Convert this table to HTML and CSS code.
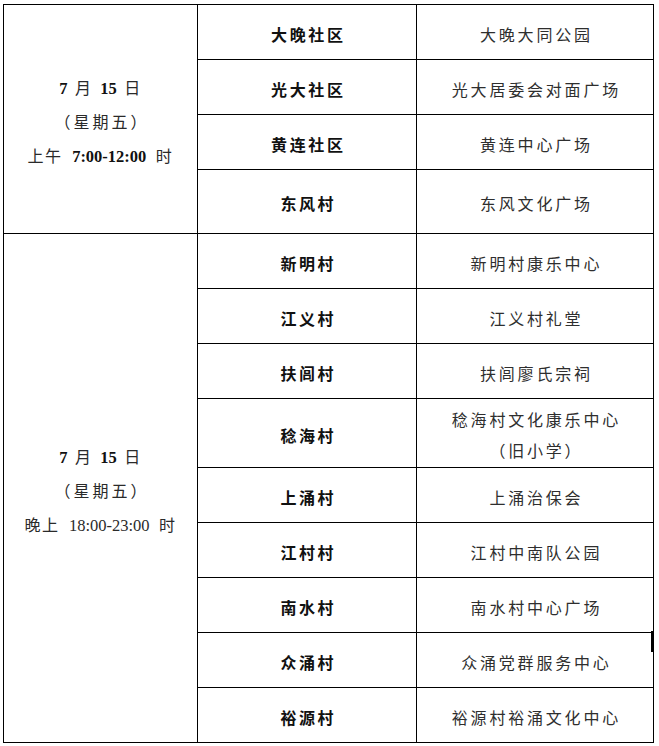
FILE: index.html
```html
<!DOCTYPE html>
<html lang="zh-CN">
<head>
<meta charset="utf-8">
<title>活动安排</title>
<link rel="stylesheet" href="styles.css">
</head>
<body>
<div class="wrap">
<table class="sched">
  <colgroup>
    <col class="c-date">
    <col class="c-site">
    <col class="c-place">
  </colgroup>
  <tbody>
    <tr class="r55">
      <td class="date" rowspan="4">
        <div><b class="num">7</b> 月 <b class="num">15</b> 日</div>
        <div class="wk">（星期五）</div>
        <div class="tm">上午 <b class="num">7:00-12:00</b> 时</div>
      </td>
      <td class="site">大晚社区</td>
      <td class="place">大晚大同公园</td>
    </tr>
    <tr class="r55"><td class="site">光大社区</td><td class="place">光大居委会对面广场</td></tr>
    <tr class="r55"><td class="site">黄连社区</td><td class="place">黄连中心广场</td></tr>
    <tr class="r64"><td class="site">东风村</td><td class="place">东风文化广场</td></tr>
    <tr class="r55">
      <td class="date" rowspan="9">
        <div><b class="num">7</b> 月 <b class="num">15</b> 日</div>
        <div class="wk">（星期五）</div>
        <div class="tm">晚上 <span class="num">18:00-23:00</span> 时</div>
      </td>
      <td class="site">新明村</td>
      <td class="place">新明村康乐中心</td>
    </tr>
    <tr class="r55"><td class="site">江义村</td><td class="place">江义村礼堂</td></tr>
    <tr class="r55"><td class="site">扶闾村</td><td class="place">扶闾廖氏宗祠</td></tr>
    <tr class="r68"><td class="site">稔海村</td><td class="place two"><div>稔海村文化康乐中心</div><div>（旧小学）</div></td></tr>
    <tr class="r55"><td class="site">上涌村</td><td class="place">上涌治保会</td></tr>
    <tr class="r55"><td class="site">江村村</td><td class="place">江村中南队公园</td></tr>
    <tr class="r55"><td class="site">南水村</td><td class="place">南水村中心广场</td></tr>
    <tr class="r55"><td class="site">众涌村</td><td class="place">众涌党群服务中心</td></tr>
    <tr class="r55"><td class="site">裕源村</td><td class="place">裕源村裕涌文化中心</td></tr>
  </tbody>
</table>
<span class="edge-mark"></span>
</div>
</body>
</html>
```

FILE: styles.css
```css
html, body {
  margin: 0;
  padding: 0;
  background: #ffffff;
}

body {
  font-family: "Liberation Serif", "Noto Sans CJK SC", serif;
  color: #262626;
}

.wrap {
  position: relative;
  padding: 4px 0 0 3px;
}

.sched {
  border-collapse: collapse;
  table-layout: fixed;
  width: 650px;
}

.c-date { width: 194px; }
.c-site { width: 219px; }
.c-place { width: 237px; }

.sched td {
  border: 1px solid #000;
  padding: 7px 0 0 0;
  text-align: center;
  vertical-align: middle;
  font-size: 16px;
  line-height: 34px;
}

.r55 { height: 55px; }
.r64 { height: 64px; }
.r68 { height: 68px; }

.date {
  letter-spacing: 1.5px;
  word-spacing: 2px;
  color: #2a2a2a;
}

.date .wk {
  letter-spacing: 3px;
  padding-left: 3px;
}

.date .tm {
  word-spacing: 4px;
}

.date .num {
  letter-spacing: 0;
  font-size: 16.5px;
}

.date b.num {
  font-weight: 700;
  color: #111;
}

.sched td.site {
  font-weight: 700;
  color: #111;
  letter-spacing: 2.6px;
  padding-left: 2.6px;
}

.sched td.place {
  letter-spacing: 2.8px;
  padding-left: 2.8px;
  color: #2e2e2e;
}

.sched td.two {
  padding-top: 6px;
  line-height: 31px;
}

.edge-mark {
  position: absolute;
  left: 651px;
  top: 631px;
  width: 3px;
  height: 21px;
  background: #000;
}
```
